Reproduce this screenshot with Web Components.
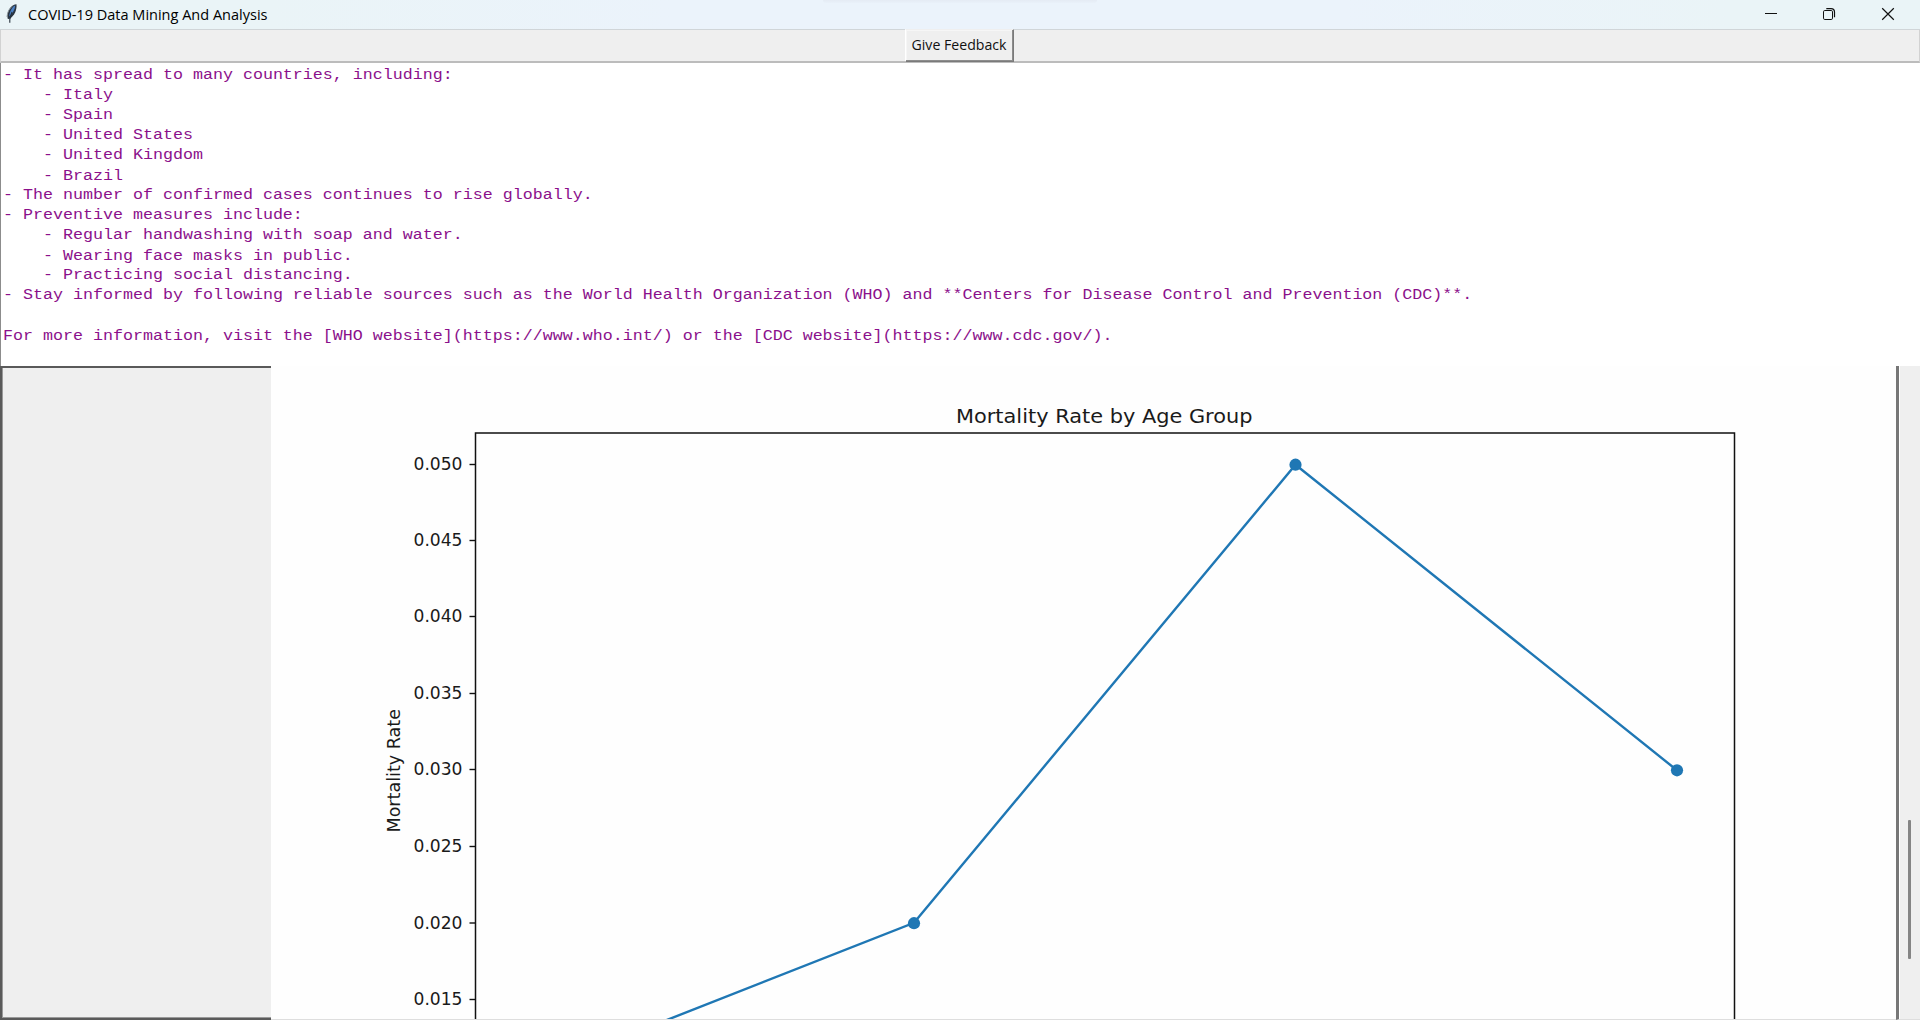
<!DOCTYPE html>
<html lang="en"><head><meta charset="utf-8"><title>COVID-19 Data Mining And Analysis</title>
<style>html,body{margin:0;height:100%;overflow:hidden;background:#efefef}</style></head><body>
<app-window></app-window>
<script>
const define = (name, html) => customElements.define(name, class extends HTMLElement {
  constructor() {
    super();
    const t = document.createElement('template');
    t.innerHTML = html;
    this.attachShadow({mode: 'open'}).append(t.content.cloneNode(true));
  }
});

define('title-bar', `<style>
:host{display:flex;height:30px;box-sizing:border-box;background:linear-gradient(90deg,#eaf4f7 0,#eaf4f7 14%,#ebf3fb 35%,#ebf3fb 70%,#eaf4f7 90%);border-bottom:1px solid #d0d5d8;flex:none;font:14px/29px "Open Sans","Noto Sans",sans-serif;color:#0c0c0c}
.feather{flex:none;width:28px;height:29px}
.caption{flex:1}
.controls{display:flex;flex:none}
.top{align-self:flex-start;width:274px;height:3px;background:linear-gradient(#e5ebf4,#e9f1f9);margin-right:626px;border-radius:0 0 8px 8px}
svg{display:block}
</style>
<svg class="feather" viewBox="0 0 28 29"><path d="M16.5 4.3C12 4.8 8 9 7.2 15.5L7.8 19 10 18.7C14.5 15.5 17 10 16.5 4.3Z" fill="#2a3542"/><path d="M15.2 5.6C12.5 6.8 9.8 10.5 9.2 16.5 12.8 13.5 15 9.5 15.2 5.6Z" fill="#4b80c4"/><path d="M12 12C10.9 14.6 10.3 16.8 9.8 19.5V22.8" fill="none" stroke="#27313c" stroke-width="1.1"/><path d="M12.5 6C9.5 8.5 7.3 11.5 7 17" fill="none" stroke="#8c969c" stroke-width=".9"/></svg>
<svg class="caption" height="29"><text x="0" y="19.8" textLength="239.5" lengthAdjust="spacingAndGlyphs">COVID-19 Data Mining And Analysis</text></svg>
<div class="top"></div>
<div class="controls"><svg width="197" height="28" viewBox="1723 0 197 28" fill="none" stroke="#111"><path d="M1765 13.5h12"/><rect x="1823.5" y="10.5" width="9" height="9" rx="1.3"/><path d="M1826.3 8.6h4.7q3.5 0 3.5 3.5v5.2" stroke-width="1.2"/><path d="M1882.2 8.3l11.6 11.4M1893.8 8.3l-11.6 11.4" stroke-width="1.2"/></svg></div>`);

define('tk-button', `<style>
:host{display:block;box-sizing:border-box;width:109px;height:33px;background:#efefef;border:1px solid;border-color:#efefef #7a7a7a #7a7a7a #fff;box-shadow:inset -1px -1px #8c8c8c,inset 1px 1px #f6f6f6}
svg{display:block}text{font:14.5px "Open Sans","Noto Sans",sans-serif;fill:#111}
</style><svg width="107" height="31"><text x="5.5" y="20.2" textLength="95" lengthAdjust="spacingAndGlyphs">Give Feedback</text></svg>`);

define('tool-row', `<style>
:host{display:flex;flex:none;justify-content:center;height:33px;box-sizing:border-box;background:#efefef;border-bottom:2px solid #bcbcbc;border-left:1px solid #d2d2d2;border-right:1px solid #d2d2d2}
tk-button{flex:none;margin:-1px 0 0 -2px}
</style><tk-button></tk-button>`);

define('text-pane', `<style>
:host{display:block;flex:none;height:303px;box-sizing:border-box;background:#fff;border-left:1px solid #8c8c8c;padding:3px 0 0 2px}
pre{margin:0;height:290px;font:16.66px/22.7273px "Liberation Mono",monospace;color:#8b108b;transform:scaleY(.88);transform-origin:0 0}
</style><pre>- It has spread to many countries, including:
    - Italy
    - Spain
    - United States
    - United Kingdom
    - Brazil
- The number of confirmed cases continues to rise globally.
- Preventive measures include:
    - Regular handwashing with soap and water.
    - Wearing face masks in public.
    - Practicing social distancing.
- Stay informed by following reliable sources such as the World Health Organization (WHO) and **Centers for Disease Control and Prevention (CDC)**.

For more information, visit the [WHO website](https://www.who.int/) or the [CDC website](https://www.cdc.gov/).</pre>`);

const ticks = [[464.5,'0.050'],[540.5,'0.045'],[616.5,'0.040'],[693.5,'0.035'],[769.5,'0.030'],[846.5,'0.025'],[923,'0.020'],[999.5,'0.015']]
  .map(([y, s]) => `<path d="M469.5 ${y}H475" stroke="#111" stroke-width="1.4"/><text x="413.5" y="${y + 5.9}" textLength="49" lengthAdjust="spacingAndGlyphs">${s}</text>`).join('');

define('line-chart', `<style>
:host{display:block;flex:1;background:#fefefe;border-bottom:1px solid #dedede;overflow:hidden}
svg{display:block}text{font:17px "DejaVu Sans",sans-serif;fill:#1a1a1a}.title{font-size:20.3px}
</style><svg width="1625" height="653" viewBox="271 366 1625 653">
<path d="M475.5 1030V433H1734.5V1030" fill="none" stroke="#111" stroke-width="1.5"/>
${ticks}
<text class="title" x="956" y="422.6" textLength="296.5" lengthAdjust="spacingAndGlyphs">Mortality Rate by Age Group</text>
<text transform="translate(400 832.5) rotate(-90)" textLength="123.5" lengthAdjust="spacingAndGlyphs">Mortality Rate</text>
<g fill="#1f77b4"><path d="M532 1073 914 922.8 1295.5 464.7 1677 770.3" fill="none" stroke="#1f77b4" stroke-width="2.4"/>
<circle cx="914" cy="923.2" r="6.1"/><circle cx="1295.5" cy="464.7" r="6.1"/><circle cx="1677" cy="770.3" r="6.1"/></g></svg>`);

define('side-panel', `<style>
:host{display:block;flex:none;width:271px;box-sizing:border-box;background:#efefef;border:2px solid #5a5a5a;border-right:0;box-shadow:inset 1px -1px #999}
</style>`);

define('scroll-bar', `<style>
:host{display:flex;flex:none;width:24px;box-sizing:border-box;background:#efefef;border-left:3px solid #777;padding:454px 0 0 9px;border-bottom:1px solid #dedede;box-shadow:inset 1px 0 #fff}
.thumb{width:3px;height:139px;background:#858585;border-radius:1px}
</style><div class="thumb"></div>`);

define('app-window', `<style>
:host{display:flex;flex-direction:column;width:1920px;height:1020px;overflow:hidden}
.content{display:flex;flex:1;min-height:0}
</style><title-bar></title-bar><tool-row></tool-row><text-pane></text-pane>
<div class="content"><side-panel></side-panel><line-chart></line-chart><scroll-bar></scroll-bar></div>`);
</script></body></html>
